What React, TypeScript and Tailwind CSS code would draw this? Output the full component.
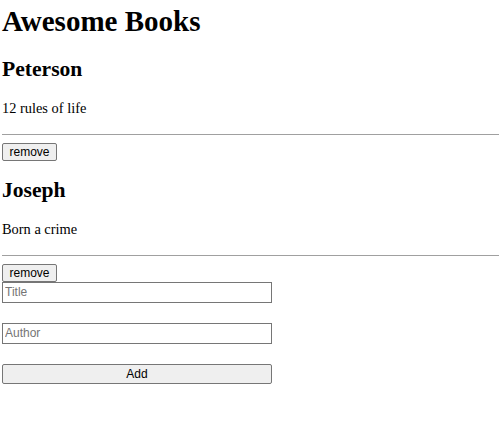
const books = [
  { author: "Peterson", title: "12 rules of life" },
  { author: "Joseph", title: "Born a crime" },
]

export default function App() {
  return (
    <div className="min-h-screen bg-white pl-[2px] pt-[4px] font-['Liberation_Serif',serif] text-black">
      <h1 className="text-[29px] font-bold leading-[35.8px]">Awesome Books</h1>

      <div>
        {books.map((book) => (
          <div key={book.author} className="mt-4">
            <h2 className="text-[21.6px] font-bold leading-[27.6px]">{book.author}</h2>
            <p className="mt-4 text-[14.4px] leading-[18.4px]">{book.title}</p>
            <hr className="mt-4 h-0 border-0 border-t border-[#a0a0a0]" />
            <button
              type="button"
              className="mt-2 block h-[18px] w-[55px] rounded-[2px] border border-[#767676] bg-[#efefef] text-center font-['Liberation_Sans',Arial,sans-serif] text-[12px] leading-[16px] text-black"
            >
              remove
            </button>
          </div>
        ))}
      </div>

      <form className="flex w-[270px] flex-col">
        <input
          type="text"
          placeholder="Title"
          className="h-[21px] border border-[#767676] px-[2px] font-['Liberation_Sans',Arial,sans-serif] text-[12px] outline-none placeholder:text-[#757575]"
        />
        <input
          type="text"
          placeholder="Author"
          className="mt-[20px] h-[21px] border border-[#767676] px-[2px] font-['Liberation_Sans',Arial,sans-serif] text-[12px] outline-none placeholder:text-[#757575]"
        />
        <button
          type="button"
          className="mt-[20px] h-[20px] rounded-[2px] border border-[#767676] bg-[#efefef] text-center font-['Liberation_Sans',Arial,sans-serif] text-[12px] leading-[16px] text-black"
        >
          Add
        </button>
      </form>
    </div>
  )
}
